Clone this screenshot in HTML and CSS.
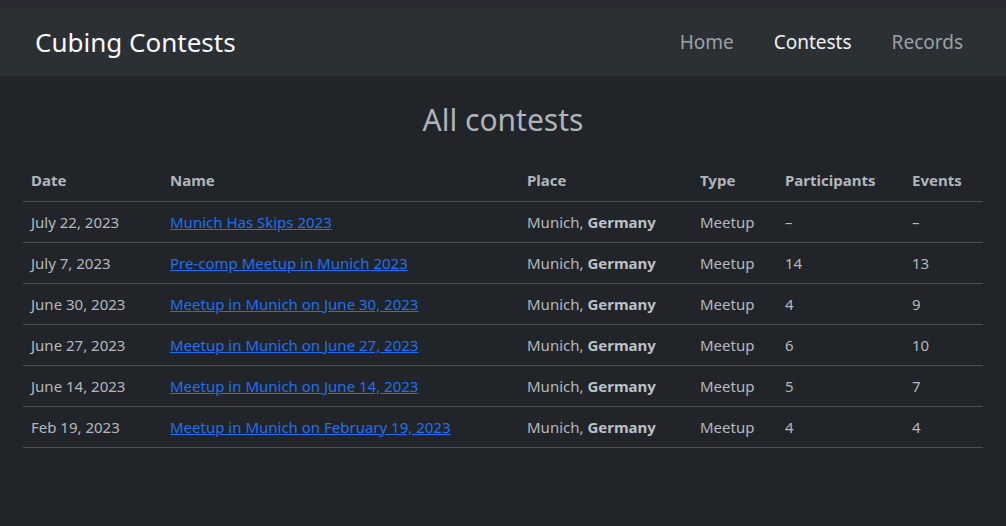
FILE: index.html
```html
<!DOCTYPE html>
<html lang="en">
<head>
<meta charset="utf-8">
<title>Cubing Contests</title>
<link rel="stylesheet" href="styles.css">
</head>
<body>
<div class="topstrip"></div>
<nav class="navbar">
  <a class="brand" href="#">Cubing Contests</a>
  <ul class="nav">
    <li><a class="nav-link" href="#">Home</a></li>
    <li><a class="nav-link active" href="#">Contests</a></li>
    <li><a class="nav-link" href="#">Records</a></li>
  </ul>
</nav>
<main class="main">
  <h1 class="title">All contests</h1>
  <table class="table">
    <colgroup>
      <col class="c-date"><col class="c-name"><col class="c-place"><col class="c-type"><col class="c-part"><col class="c-events">
    </colgroup>
    <thead>
      <tr><th>Date</th><th>Name</th><th>Place</th><th>Type</th><th>Participants</th><th>Events</th></tr>
    </thead>
    <tbody>
      <tr><td>July 22, 2023</td><td><a href="#">Munich Has Skips 2023</a></td><td>Munich, <b>Germany</b></td><td>Meetup</td><td>–</td><td>–</td></tr>
      <tr><td>July 7, 2023</td><td><a href="#">Pre-comp Meetup in Munich 2023</a></td><td>Munich, <b>Germany</b></td><td>Meetup</td><td>14</td><td>13</td></tr>
      <tr><td>June 30, 2023</td><td><a href="#">Meetup in Munich on June 30, 2023</a></td><td>Munich, <b>Germany</b></td><td>Meetup</td><td>4</td><td>9</td></tr>
      <tr><td>June 27, 2023</td><td><a href="#">Meetup in Munich on June 27, 2023</a></td><td>Munich, <b>Germany</b></td><td>Meetup</td><td>6</td><td>10</td></tr>
      <tr><td>June 14, 2023</td><td><a href="#">Meetup in Munich on June 14, 2023</a></td><td>Munich, <b>Germany</b></td><td>Meetup</td><td>5</td><td>7</td></tr>
      <tr><td>Feb 19, 2023</td><td><a href="#">Meetup in Munich on February 19, 2023</a></td><td>Munich, <b>Germany</b></td><td>Meetup</td><td>4</td><td>4</td></tr>
    </tbody>
  </table>
</main>
</body>
</html>
```
FILE: styles.css
```css
* { box-sizing: border-box; }
html, body { margin: 0; padding: 0; }
body {
  background: #212529;
  color: #b3b8bd;
  font-family: "Noto Sans", "Open Sans", sans-serif;
  font-size: 16px;
  height: 526px;
  overflow: hidden;
}
.topstrip { height: 9px; background: #2b2a33; }
.navbar {
  height: 67px;
  background: #2b3035;
  display: flex;
  align-items: center;
  justify-content: space-between;
  padding: 0 23px 0 35px;
}
.brand {
  color: #f8f9fa;
  text-decoration: none;
  font-size: 26px;
  line-height: 1;
  margin-top: -2px;
}
.nav { list-style: none; display: flex; margin: 0; padding: 0; margin-top: -2px; }
.nav-link {
  display: block;
  color: #9da1a5;
  text-decoration: none;
  font-size: 19px;
  padding: 0 20px;
}
.nav-link:first-child { }
.nav-link.active { color: #eef0f2; }
.main { padding: 0 23px; }
.title {
  margin: 24px 0 0;
  height: 60px;
  text-align: center;
  font-weight: 400;
  font-size: 30px;
  line-height: 40px;
  color: #aeb3b8;
}
.table { width: 960px; border-collapse: collapse; table-layout: fixed; }
.c-date { width: 139px; }
.c-name { width: 357px; }
.c-place { width: 173px; }
.c-type { width: 85px; }
.c-part { width: 127px; }
.c-events { width: 79px; }
.table th, .table td {
  text-align: left;
  padding: 0 8px;
  height: 41px;
  border-bottom: 1px solid #4b5055;
  white-space: nowrap;
}
.table th { font-weight: 700; color: #b0b6bc; font-size: 15px; }
.table td { color: #b3b8bd; font-size: 15px; }
.table td b { font-weight: 700; color: #bcc1c6; }
.table a { color: #1f6ff0; }
```
